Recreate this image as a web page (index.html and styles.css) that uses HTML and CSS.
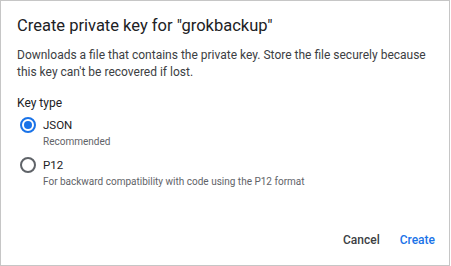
FILE: index.html
```html
<!DOCTYPE html>
<html>
<head>
<meta charset="utf-8">
<link rel="stylesheet" href="styles.css">
</head>
<body>
<div class="dialog">
  <h1 class="title">Create private key for "grokbackup"</h1>
  <p class="desc">Downloads a file that contains the private key. Store the file securely because this key can't be recovered if lost.</p>
  <div class="label">Key type</div>
  <div class="options">
    <div class="option">
      <span class="radio checked"></span>
      <div class="opt-text">
        <div class="opt-name">JSON</div>
        <div class="opt-hint">Recommended</div>
      </div>
    </div>
    <div class="option">
      <span class="radio"></span>
      <div class="opt-text">
        <div class="opt-name">P12</div>
        <div class="opt-hint">For backward compatibility with code using the P12 format</div>
      </div>
    </div>
  </div>
  <div class="actions">
    <button class="btn cancel">Cancel</button>
    <button class="btn create">Create</button>
  </div>
</div>
</body>
</html>
```
FILE: styles.css
```css
html, body { margin: 0; padding: 0; background: #fff; }
body { font-family: Roboto, "Noto Sans", sans-serif; color: #202124; }
.dialog {
  width: 450px;
  height: 266px;
  box-sizing: border-box;
  border: 1px solid #c6c6c6;
  padding: 0 16px;
  display: flex;
  flex-direction: column;
}
.title {
  margin: 15px 0 0;
  font-size: 16.5px;
  line-height: 20px;
  font-weight: 400;
  color: #202124;
}
.desc {
  margin: 10.5px 0 0;
  font-size: 12px;
  line-height: 17px;
  color: #3c4043;
}
.label {
  margin-top: 14.5px;
  font-size: 12px;
  line-height: 16px;
  color: #202124;
}
.options { display: flex; flex-direction: column; gap: 7.5px; margin-top: 5.5px; }
.option { display: flex; gap: 7px; }
.radio {
  width: 16px; height: 16px;
  box-sizing: border-box;
  border: 2px solid #5f6368;
  border-radius: 50%;
  margin-left: 3px;
  flex: none;
  position: relative;
}
.radio.checked { border-color: #1a73e8; }
.radio.checked::after {
  content: "";
  position: absolute;
  left: 2px; top: 2px;
  width: 8px; height: 8px;
  border-radius: 50%;
  background: #1a73e8;
}
.opt-name { font-size: 11.5px; line-height: 16px; color: #202124; }
.opt-hint { font-size: 10px; line-height: 14px; color: #5f6368; margin-top: 2.5px; }
.actions {
  margin-top: auto;
  margin-bottom: 9px;
  margin-right: -10px;
  display: flex;
  justify-content: flex-end;
  gap: 4px;
}
.btn {
  background: none;
  border: none;
  font-family: Roboto, sans-serif;
  font-size: 12px;
  font-weight: 500;
  padding: 8px;
  line-height: 16px;
}
.cancel { color: #3c4043; }
.create { color: #1a73e8; }
```
